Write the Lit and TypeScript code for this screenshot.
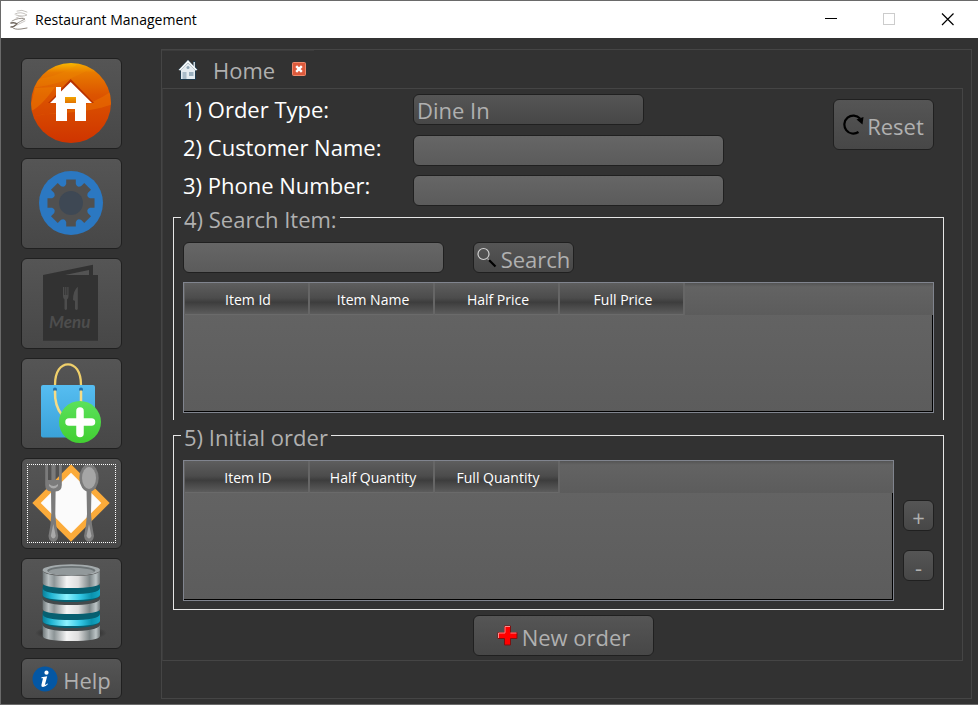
import { LitElement, html, svg, css } from "lit";
import { customElement, state } from "lit/decorators.js";

function gearPath(cx: number, cy: number): string {
  const pts: string[] = [];
  for (let i = 0; i < 8; i++) {
    const base = (i * Math.PI) / 4;
    const corners: [number, number][] = [
      [-0.34, 18],
      [-0.25, 19.5],
      [-0.2, 24],
      [0.2, 24],
      [0.25, 19.5],
      [0.34, 18],
    ];
    for (const [a, r] of corners) {
      const x = cx + r * Math.sin(base + a);
      const y = cy - r * Math.cos(base + a);
      pts.push(`${x.toFixed(2)} ${y.toFixed(2)}`);
    }
  }
  return `M${pts.join("L")}Z`;
}

const homeIcon = svg`
  <defs>
    <linearGradient id="orb" x1="0" y1="0" x2="0" y2="1">
      <stop offset="0" stop-color="#f9b800"></stop>
      <stop offset=".12" stop-color="#e87a00"></stop>
      <stop offset=".4" stop-color="#dc5400"></stop>
      <stop offset="1" stop-color="#cf3400"></stop>
    </linearGradient>
    <linearGradient id="win" x1="0" y1="0" x2="0" y2="1">
      <stop offset="0" stop-color="#f2a400"></stop>
      <stop offset="1" stop-color="#e27200"></stop>
    </linearGradient>
    <clipPath id="orbclip"><circle cx="50" cy="45" r="40"></circle></clipPath>
  </defs>
  <circle cx="50" cy="45" r="40" fill="url(#orb)"></circle>
  <g clip-path="url(#orbclip)">
    <path d="M8 30C30 28 52 22 74 8L60 4C40 18 24 20 12 22Z" fill="#f08c00" opacity=".3"></path>
    <path d="M8 54C18 50 26 40 34 29L14 30Z" fill="#f08a00" opacity=".4"></path>
    <path d="M8 58C40 56 70 48 92 32V46C64 56 40 54 8 58Z" fill="#ef7d00" opacity=".4"></path>
  </g>
  <path d="M27 45L35 37V29H40V31L49.700 21L73 45Z" fill="#b83200"></path>
  <path d="M49.700 24L71 45H65V63H54V51H46V63H35V45H29L35 39V29H40V33.600Z" fill="#fff"></path>
  <rect x="44" y="39" width="11" height="6" fill="url(#win)"></rect>
`;

const gearIcon = svg`
  <circle cx="50" cy="45" r="32" fill="#2b78c2"></circle>
  <path d=${gearPath(50, 45)} fill="#505050"></path>
  <circle cx="50" cy="45" r="12" fill="#3e4854"></circle>
`;

const menuIcon = svg`
  <path d="M22 17L72 6.700V17H77V82.700H22ZM44 17H68V12Z" fill="#323232" fill-rule="evenodd"></path>
  <path d="M42 29V38Q42 41 43.500 41.500V51Q44.800 53 46 51V41.500Q47.500 41 47.500 38V29H46.300V37H45.400V29H44.200V37H43.300V29Z" fill="#4d4d4d"></path>
  <path d="M56.500 29Q52 33 52 42L54 43V51Q55.500 53 56.800 51V29Z" fill="#4d4d4d"></path>
  <text x="28" y="70" class="menu-word" fill="#4d4d4d">Menu</text>
`;

const bagIcon = svg`
  <defs>
    <linearGradient id="bag" x1="0" y1="0" x2="0" y2="1">
      <stop offset="0" stop-color="#56bdf1"></stop>
      <stop offset="1" stop-color="#3aa2d9"></stop>
    </linearGradient>
    <linearGradient id="green" x1="0" y1="0" x2="0" y2="1">
      <stop offset="0" stop-color="#5be15b"></stop>
      <stop offset="1" stop-color="#42cf32"></stop>
    </linearGradient>
  </defs>
  <rect x="20" y="27" width="54" height="52.500" rx="2" fill="url(#bag)"></rect>
  <path d="M34 27C34 13 40 6.300 47 6.300S60 13 60 27" fill="none" stroke="#f0d06b" stroke-width="2.300"></path>
  <circle cx="34" cy="31.500" r="2" fill="#2470a8"></circle>
  <circle cx="60" cy="31.500" r="2" fill="#2470a8"></circle>
  <path d="M34 32.500C33.600 44 36 51 41 57M60 32.500V46" fill="none" stroke="#f5dc86" stroke-width="2.500"></path>
  <circle cx="59" cy="64" r="21" fill="url(#green)"></circle>
  <path d="M59 53V75.500M48 64H70.500" stroke="#fff" stroke-width="7.500" stroke-linecap="round"></path>
`;

const plateIcon = svg`
  <path d="M50 6.300L88.700 45L50 83.700L11.300 45Z" fill="#fbab3a"></path>
  <path d="M50 14.700L80.300 45L50 75.300L19.700 45Z" fill="#fbfbfb"></path>
  <path d="M24.200 6V27Q24.200 33 30 33.500L30.300 56Q30 66 27.500 78Q28 83.800 32.300 83.800T37.200 78Q34.600 66 34.300 56L34.600 33.500Q40.800 33 40.800 27V6H38V22H34.600V6H30.400V22H27V6Z" fill="#7b7b7b"></path>
  <path d="M28 26Q32.500 30 37 26V28Q32.500 33 28 28ZM32.300 66L29.800 78Q32.300 83 34.800 78Z" fill="#a9a9a9"></path>
  <ellipse cx="68" cy="20" rx="9.700" ry="13.800" fill="#7b7b7b"></ellipse>
  <path d="M65.500 30L66 56Q65.500 66 63 78Q64 83.800 68 83.800T73 78Q70.500 66 70 56L70.500 30Z" fill="#7b7b7b"></path>
  <ellipse cx="68" cy="20" rx="7" ry="11" fill="#a6a6a6"></ellipse>
  <path d="M68 66L65.500 78Q68 83 70.500 78Z" fill="#a9a9a9"></path>
`;

const drum = (y: number, h: number, fill: string) =>
  svg`<path d="M21.700 ${y}Q22 ${y + 6} 50 ${y + 6}T79 ${y}V${y + h}Q78 ${y + h + 5} 50 ${y + h + 5}T21.700 ${y + h}Z" fill=${fill}></path>`;

const databaseIcon = svg`
  <defs>
    <linearGradient id="steel">
      <stop offset="0" stop-color="#6f7779"></stop>
      <stop offset=".1" stop-color="#b9c0c2"></stop>
      <stop offset=".2" stop-color="#8d9597"></stop>
      <stop offset=".42" stop-color="#f4f4f4"></stop>
      <stop offset=".62" stop-color="#dedede"></stop>
      <stop offset=".82" stop-color="#7d8688"></stop>
      <stop offset=".93" stop-color="#bcc4c6"></stop>
      <stop offset="1" stop-color="#727a7c"></stop>
    </linearGradient>
    <linearGradient id="cyan">
      <stop offset="0" stop-color="#0a819b"></stop>
      <stop offset=".15" stop-color="#21b5d3"></stop>
      <stop offset=".42" stop-color="#8df2ff"></stop>
      <stop offset=".65" stop-color="#35c9e6"></stop>
      <stop offset=".85" stop-color="#0a92ae"></stop>
      <stop offset="1" stop-color="#16a7c4"></stop>
    </linearGradient>
    <radialGradient id="shade">
      <stop offset=".6" stop-color="#222" stop-opacity=".9"></stop>
      <stop offset="1" stop-color="#222" stop-opacity="0"></stop>
    </radialGradient>
  </defs>
  <ellipse cx="50" cy="75" rx="36" ry="8" fill="url(#shade)"></ellipse>
  <rect x="21.700" y="52" width="57.300" height="22" rx="3" fill="#075f70"></rect>
  <rect x="21.700" y="26" width="57.300" height="18" rx="3" fill="#075f70"></rect>
  ${drum(66, 12, "url(#steel)")}
  <path d="M21.700 63Q24 70 50 70T79 63V67Q76 73 50 73T21.700 67Z" fill="#43494b"></path>
  ${drum(56, 7, "url(#cyan)")}
  ${drum(40, 11, "url(#steel)")}
  <path d="M21.700 37Q24 44 50 44T79 37V41Q76 47 50 47T21.700 41Z" fill="#43494b"></path>
  ${drum(30, 7, "url(#cyan)")}
  ${drum(12, 13, "url(#steel)")}
  <ellipse cx="50.300" cy="12" rx="28.700" ry="5.800" fill="#a4abad"></ellipse>
  <ellipse cx="50.300" cy="12.500" rx="24" ry="4.500" fill="#6c7375"></ellipse>
  <ellipse cx="50.300" cy="13.500" rx="22.500" ry="3.700" fill="#92999b"></ellipse>
`;

const sideItems = [
  { name: "Home", art: homeIcon },
  { name: "Settings", art: gearIcon },
  { name: "Menu", art: menuIcon },
  { name: "Add order", art: bagIcon },
  { name: "Dining", art: plateIcon },
  { name: "Database", art: databaseIcon },
];

@customElement("data-grid")
export class DataGrid extends LitElement {
  static properties = { columns: { attribute: false }, label: {} };
  declare columns: string[];
  declare label: string;

  static styles = css`
    :host {
      display: flex;
      flex-direction: column;
      box-sizing: border-box;
      border: 1px solid #80848e;
      background: linear-gradient(#656565, #5c5c5c);
    }
    table {
      width: 100%;
      padding-left: 1px;
      table-layout: fixed;
      border-collapse: separate;
      border-spacing: 0;
    }
    th {
      box-sizing: border-box;
      width: 125px;
      height: 32px;
      padding: 2px 0 0 3px;
      font: 14px/20px "Open Sans", "Noto Sans", sans-serif;
      color: #fff;
      text-align: center;
      border-right: 2px solid #666;
      border-bottom: 1px solid #6a6a6a;
      background: linear-gradient(#5e5e5e, #4c4c4c 48%, #3d3d3d 62%, #5c5c5c);
    }
    td {
      padding: 0;
      background: linear-gradient(#545454, #636363 12%, #5c5c5c);
    }
    .body {
      flex: 1;
      border-right: 1px solid #000;
      border-bottom: 1px solid #000;
    }
  `;

  render() {
    return html`
      <table aria-label=${this.label}>
        <thead>
          <tr>
            ${this.columns.map((c) => html`<th scope="col">${c}</th>`)}
            <td></td>
          </tr>
        </thead>
      </table>
      <div class="body"></div>
    `;
  }
}

@customElement("app-root")
export class AppRoot extends LitElement {
  @state() private orderType = "Dine In";

  static styles = css`
    :host {
      display: flex;
      flex-direction: column;
      box-sizing: border-box;
      min-height: 100vh;
      border: 1px solid #6a6a6a;
      border-right: 0;
      background: #323232;
      color: #fff;
      font: 22px/30px "Open Sans", "Noto Sans", sans-serif;
    }
    * {
      box-sizing: border-box;
    }
    svg {
      display: block;
      flex: none;
    }
    button,
    input,
    select {
      margin: 0;
      font: inherit;
      border: 1px solid #202020;
      border-radius: 6px;
    }
    button,
    select {
      color: #b0b0b0;
      background: linear-gradient(#555, #474747);
    }
    button {
      display: flex;
      align-items: center;
      justify-content: center;
      padding: 0;
    }
    input {
      height: 31px;
      padding: 0 4px;
      color: #fff;
      background: linear-gradient(#666, #5b5b5b);
    }
    .titlebar {
      display: flex;
      align-items: center;
      height: 37px;
      padding: 0 2px 0 8px;
      background: #fff;
      color: #000;
    }
    .title {
      flex: 1;
      margin: 0 0 0 6px;
      font: 14px/20px "Open Sans", "Noto Sans", sans-serif;
    }
    .winbtn {
      width: 58px;
      height: 37px;
      border: 0;
      border-radius: 0;
      background: none;
    }
    .main {
      flex: 1;
      display: flex;
      padding: 11px 6px 5px 20px;
    }
    .side {
      display: flex;
      flex-direction: column;
      gap: 9px;
      width: 101px;
      margin: 9px 39px 0 0;
    }
    .tile {
      height: 91px;
    }
    .focused {
      outline: 1px dotted #fff;
      outline-offset: -7px;
    }
    .menu-word {
      font: italic 700 17px Lato, sans-serif;
    }
    .help {
      height: 41px;
      gap: 5px;
    }
    .help span,
    .label {
      padding-top: 2px;
    }
    .panel {
      flex: 1;
      min-width: 0;
      border: 1px solid #454545;
      padding-right: 8px;
    }
    .tabs {
      display: flex;
      height: 38px;
    }
    .tab {
      display: flex;
      align-items: flex-start;
      width: 152px;
      padding: 4px 0 0 15px;
      border-top: 1px solid #3c3c3c;
    }
    .tab button {
      border: 0;
      background: none;
      border-radius: 0;
    }
    .tab .name {
      gap: 14px;
      margin-right: 17px;
    }
    .tab .close {
      margin-top: 7px;
    }
    .page {
      padding: 5px 18px 4px 10px;
      border: 1px solid #454545;
      border-left-color: #3c3c3c;
    }
    .form {
      display: flex;
      padding: 0 10px;
    }
    .labels {
      display: flex;
      flex-direction: column;
      gap: 8px;
      width: 230px;
    }
    .fields {
      display: flex;
      flex-direction: column;
      gap: 9px;
      width: 311px;
    }
    select {
      appearance: none;
      width: 231px;
      height: 31px;
      margin-bottom: 1px;
      padding: 2px 3px 0;
      line-height: 27px;
    }
    .reset {
      width: 101px;
      height: 51px;
      margin: 5px 0 0 auto;
      gap: 3px;
    }
    fieldset {
      min-width: 0;
      margin: 0;
      padding: 12px 9px 8px;
      border: 1px solid #e6e6e6;
    }
    .lookup {
      margin: -2px 0 2px;
      padding-bottom: 7px;
      border-bottom: 0;
    }
    legend {
      margin-left: -2px;
      padding: 4px 3px 0;
      line-height: 22px;
      color: #b0b0b0;
    }
    .row {
      display: flex;
      gap: 29px;
      margin-bottom: 9px;
    }
    .row input {
      width: 261px;
    }
    .search {
      width: 101px;
      height: 31px;
      gap: 4px;
    }
    .found {
      height: 131px;
    }
    .order {
      display: flex;
      align-items: center;
      gap: 9px;
    }
    .ordered {
      flex: 1;
      min-width: 0;
      height: 141px;
    }
    .steps {
      display: flex;
      flex-direction: column;
      gap: 19px;
      padding-top: 20px;
    }
    .step {
      width: 31px;
      height: 31px;
      padding-top: 2px;
    }
    .new {
      width: 181px;
      height: 41px;
      margin: 5px 0 0 300px;
      gap: 4px;
    }
  `;

  render() {
    return html`
      <header class="titlebar">
        <svg width="20" height="22" viewBox="0 0 20 22" fill="none" stroke-linecap="round">
          <path d="M8 2Q13 0 18 3M6 5Q12 2 18 6Q14 8 7 6" stroke="#c0bcb8" stroke-width=".900"></path>
          <path d="M3 12Q10 8 16 10Q12 12 7 15" stroke="#9d9791"></path>
          <path d="M2 14Q6 13 8 15Q5 18 2 18" stroke="#6d645c" stroke-width="1.500"></path>
          <path d="M3 18Q5 21 12 20L18 19" stroke="#8d857e"></path>
          <path d="M7 9Q11 6 14 8M8 16Q12 14 16 12" stroke="#ccc8c5"></path>
        </svg>
        <h1 class="title">Restaurant Management</h1>
        <button class="winbtn" aria-label="Minimize">
          <svg width="13" height="13" viewBox="0 0 13 13"><path d="M0 5.500H12" stroke="#000"></path></svg>
        </button>
        <button class="winbtn" aria-label="Maximize" disabled>
          <svg width="13" height="13" viewBox="0 0 13 13"><rect x=".5" y=".5" width="11" height="11" fill="none" stroke="#ccc"></rect></svg>
        </button>
        <button class="winbtn" aria-label="Close">
          <svg width="13" height="13" viewBox="0 0 13 13"><path d="M1 .5L12.500 12M12.500 .5L1 12" stroke="#000" stroke-width="1.200"></path></svg>
        </button>
      </header>
      <div class="main">
        <nav class="side">
          ${sideItems.map(
            (item) => html`<button class="tile ${item.name === "Dining" ? "focused" : ""}" aria-label=${item.name}>
              <svg width="99" height="89" viewBox="1 1 99 89">${item.art}</svg>
            </button>`
          )}
          <button class="help">
            <svg width="26" height="26" viewBox="0 0 26 26">
              <circle cx="13" cy="13" r="12.500" fill="#0457a4"></circle>
              <circle cx="14.500" cy="6.700" r="2.100" fill="#fff"></circle>
              <path d="M9.500 11.300L15.200 10.300L13 18.500Q13 19.300 15.600 17.400L16 18Q13.500 21 11 21Q9 21 9.500 18.500L11 12.300H9.300Z" fill="#fff"></path>
            </svg>
            <span>Help</span>
          </button>
        </nav>
        <main class="panel">
          <div class="tabs">
            <div class="tab">
              <button class="name">
                <svg width="22" height="24" viewBox="0 0 22 24">
                  <path d="M16 3H18.500V8L21 12H19V22H3V12H1L11 1.500L16 7Z" fill="#1f3a4c"></path>
                  <path d="M16.500 4H18V10H16.500Z" fill="#cfd9e0"></path>
                  <path d="M4 12L11 5L18 12V21H4Z" fill="#e4ecf1"></path>
                  <path d="M1.500 12L11 2L20.500 12L18.500 12.500L11 5L3.500 12.500Z" fill="#f4f8fa"></path>
                  <path d="M5.500 14H9.500V21H5.500Z" fill="#a9bcc9"></path>
                  <path d="M12 14H16.500V18H12Z" fill="#9ab0bf"></path>
                  <circle cx="11" cy="9.500" r="1.500" fill="#8fa6b5"></circle>
                </svg>
                <span>Home</span>
              </button>
              <button class="close" aria-label="Close tab">
                <svg width="14" height="14" viewBox="0 0 14 14">
                  <rect x=".5" y=".5" width="13" height="13" rx="1" fill="#dd5a3c" stroke="#f08a6c"></rect>
                  <path d="M4.200 4.200L9.800 9.800M9.800 4.200L4.200 9.800" stroke="#fff" stroke-width="2.400"></path>
                </svg>
              </button>
            </div>
          </div>
          <section class="page">
            <div class="form">
              <div class="labels">
                <label for="type">1) Order Type:</label>
                <label for="customer">2) Customer Name:</label>
                <label for="phone">3) Phone Number:</label>
              </div>
              <div class="fields">
                <select
                  id="type"
                  .value=${this.orderType}
                  @change=${(e: Event) => (this.orderType = (e.target as HTMLSelectElement).value)}
                >
                  <option>Dine In</option>
                </select>
                <input id="customer" type="text" />
                <input id="phone" type="tel" />
              </div>
              <button class="reset">
                <svg width="21" height="22" viewBox="0 0 21 22">
                  <path d="M15.500 18A9 9 0 1 1 17 4.500" fill="none" stroke="#000" stroke-width="2.200"></path>
                  <path d="M13.500 5.500L20.500 3L19.500 10.500Z" fill="#000"></path>
                </svg>
                <span class="label">Reset</span>
              </button>
            </div>
            <fieldset class="lookup">
              <legend>4) Search Item:</legend>
              <div class="row">
                <input type="text" aria-label="Search item" />
                <button class="search">
                  <svg width="20" height="21" viewBox="0 0 20 21">
                    <circle cx="6.500" cy="7" r="5.500" fill="none" stroke="#d0d0d0" stroke-width="1.200"></circle>
                    <path d="M10 11L12.500 13.500" stroke="#999" stroke-width="1.500"></path>
                    <path d="M12 13L18.500 19.500" stroke="#000" stroke-width="2.200"></path>
                  </svg>
                  <span class="label">Search</span>
                </button>
              </div>
              <data-grid
                class="found"
                label="Search results"
                .columns=${["Item Id", "Item Name", "Half Price", "Full Price"]}
              ></data-grid>
            </fieldset>
            <fieldset>
              <legend>5) Initial order</legend>
              <div class="order">
                <data-grid
                  class="ordered"
                  label="Initial order"
                  .columns=${["Item ID", "Half Quantity", "Full Quantity"]}
                ></data-grid>
                <div class="steps">
                  <button class="step">+</button>
                  <button class="step">-</button>
                </div>
              </div>
            </fieldset>
            <button class="new">
              <svg width="21" height="21" viewBox="0 0 21 21">
                <path d="M7.500 1H13.500V7.500H20V13.500H13.500V20H7.500V13.500H1V7.500H7.500Z" fill="#f00" stroke="#7d1010"></path>
                <path d="M8 7.800V1.500H13M1.500 13V8H8M13.500 8H19.500" fill="none" stroke="#ff8a8a"></path>
              </svg>
              <span class="label">New order</span>
            </button>
          </section>
        </main>
      </div>
    `;
  }
}
